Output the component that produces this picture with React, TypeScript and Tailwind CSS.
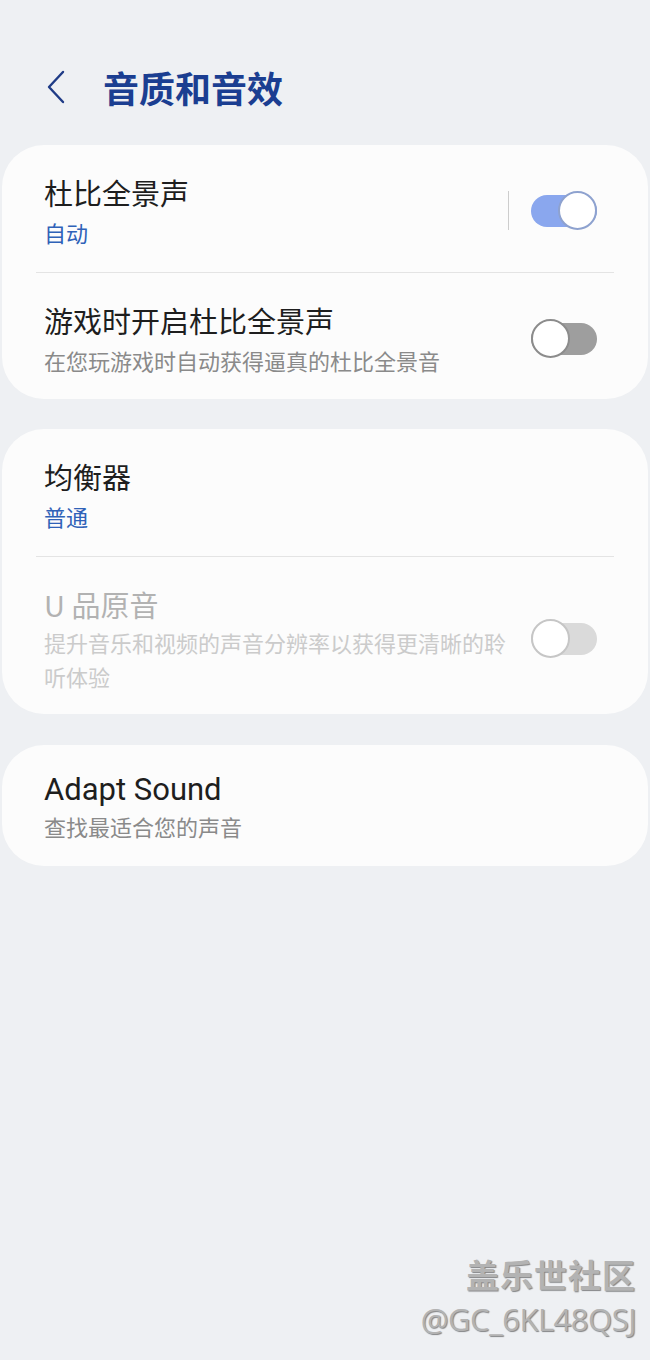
import React from 'react';

const CJK = '"Noto Sans CJK SC", sans-serif';
const LATIN = 'Roboto, "Noto Sans CJK SC", sans-serif';

function Toggle({ on, disabled }: { on: boolean; disabled?: boolean }) {
  const track = on ? 'bg-[#8aa7ee]' : disabled ? 'bg-[#dadada]' : 'bg-[#9e9e9e]';
  const ring = on ? 'border-[#8ea2cf]' : disabled ? 'border-[#c6c6c6]' : 'border-[#8c8c8c]';
  return (
    <div className="relative w-[66px] h-[40px] shrink-0">
      <div className={`absolute left-0 right-0 top-[4px] h-[32px] rounded-full ${track}`} />
      <div
        className={`absolute top-0 w-[39px] h-[39px] rounded-full bg-white border-2 ${ring} ${on ? 'right-0' : 'left-0'}`}
      />
    </div>
  );
}

function Row({
  title,
  sub,
  subBlue,
  disabled,
  toggle,
  splitLine,
  latin,
  className = 'pt-[27px] pb-[23px]',
  subGap = 'mt-[3px]'
}: {
  title: string;
  sub: string;
  subBlue?: boolean;
  disabled?: boolean;
  toggle?: 'on' | 'off';
  splitLine?: boolean;
  latin?: boolean;
  className?: string;
  subGap?: string;
}) {
  const titleColor = disabled ? 'text-[#b2b2b2]' : 'text-[#1e1e1e]';
  const subColor = subBlue ? 'text-[#2f62b8]' : disabled ? 'text-[#cbcbcb]' : 'text-[#8a8a8a]';
  return (
    <div className={`flex items-center pl-[42px] pr-[51px] ${className}`}>
      <div className="flex-1 min-w-0">
        <div
          className={`${latin ? 'text-[31px]' : 'text-[29px]'} leading-[40px] ${titleColor}`}
          style={{ fontFamily: latin ? LATIN : CJK }}
        >
          {title}
        </div>
        <div className={`${subGap} text-[22px] leading-[34px] ${subColor}`} style={{ fontFamily: CJK }}>
          {sub}
        </div>
      </div>
      {splitLine && <div className="w-px h-[39px] bg-[#cdcdcd] mr-[22px]" />}
      {toggle && (
        <div className={splitLine ? '' : 'ml-[17px]'}>
          <Toggle on={toggle === 'on'} disabled={disabled} />
        </div>
      )}
    </div>
  );
}

function Divider() {
  return <div className="mx-[34px] h-px bg-[#e4e4e4]" />;
}

export default function App() {
  return (
    <div className="relative w-[650px] h-[1360px] bg-[#eef0f3] overflow-hidden">
      {/* header */}
      <div className="h-[145px] pt-[29px] pl-[46px] flex items-center">
        <svg width="20" height="34" viewBox="0 0 20 34" fill="none">
          <path d="M17 2 L3 17 L17 32" stroke="#1f3b86" strokeWidth="2.4" strokeLinecap="round" strokeLinejoin="round" />
        </svg>
        <div
          className="ml-[37px] text-[36px] leading-[44px] font-bold text-[#1b3e91]"
          style={{ fontFamily: CJK }}
        >
          音质和音效
        </div>
      </div>

      <div className="flex flex-col mx-[2px]">
        <div className="bg-[#fcfcfc] rounded-[42px]">
          <Row title="杜比全景声" sub="自动" subBlue toggle="on" splitLine />
          <Divider />
          <Row title="游戏时开启杜比全景声" sub="在您玩游戏时自动获得逼真的杜比全景音" toggle="off" className="pt-[27px] pb-[22px]" />
        </div>

        <div className="mt-[30px] bg-[#fcfcfc] rounded-[42px]">
          <Row title="均衡器" sub="普通" subBlue />
          <Divider />
          <Row
            title="U 品原音"
            sub="提升音乐和视频的声音分辨率以获得更清晰的聆听体验"
            toggle="off"
            disabled
            className="pt-[27px] pb-[21px]"
            subGap="mt-[1px]"
          />
        </div>

        <div className="mt-[31px] bg-[#fcfcfc] rounded-[42px]">
          <Row title="Adapt Sound" sub="查找最适合您的声音" latin className="pt-[25px] pb-[23px]" subGap="-mt-px" />
        </div>
      </div>

      {/* watermark */}
      <div className="absolute right-[14px] top-[1250px] flex flex-col items-end text-[#b3b3b3] [text-shadow:1px_1px_1px_rgba(0,0,0,0.45)]">
        <div className="text-[33px] leading-[48px] font-bold tracking-[1px]" style={{ fontFamily: CJK }}>
          盖乐世社区
        </div>
        <div
          className="text-[31px] leading-[42px] tracking-[-0.5px]"
          style={{ fontFamily: '"Open Sans", "Liberation Sans", sans-serif' }}
        >
          @GC_6KL48QSJ
        </div>
      </div>
    </div>
  );
}
